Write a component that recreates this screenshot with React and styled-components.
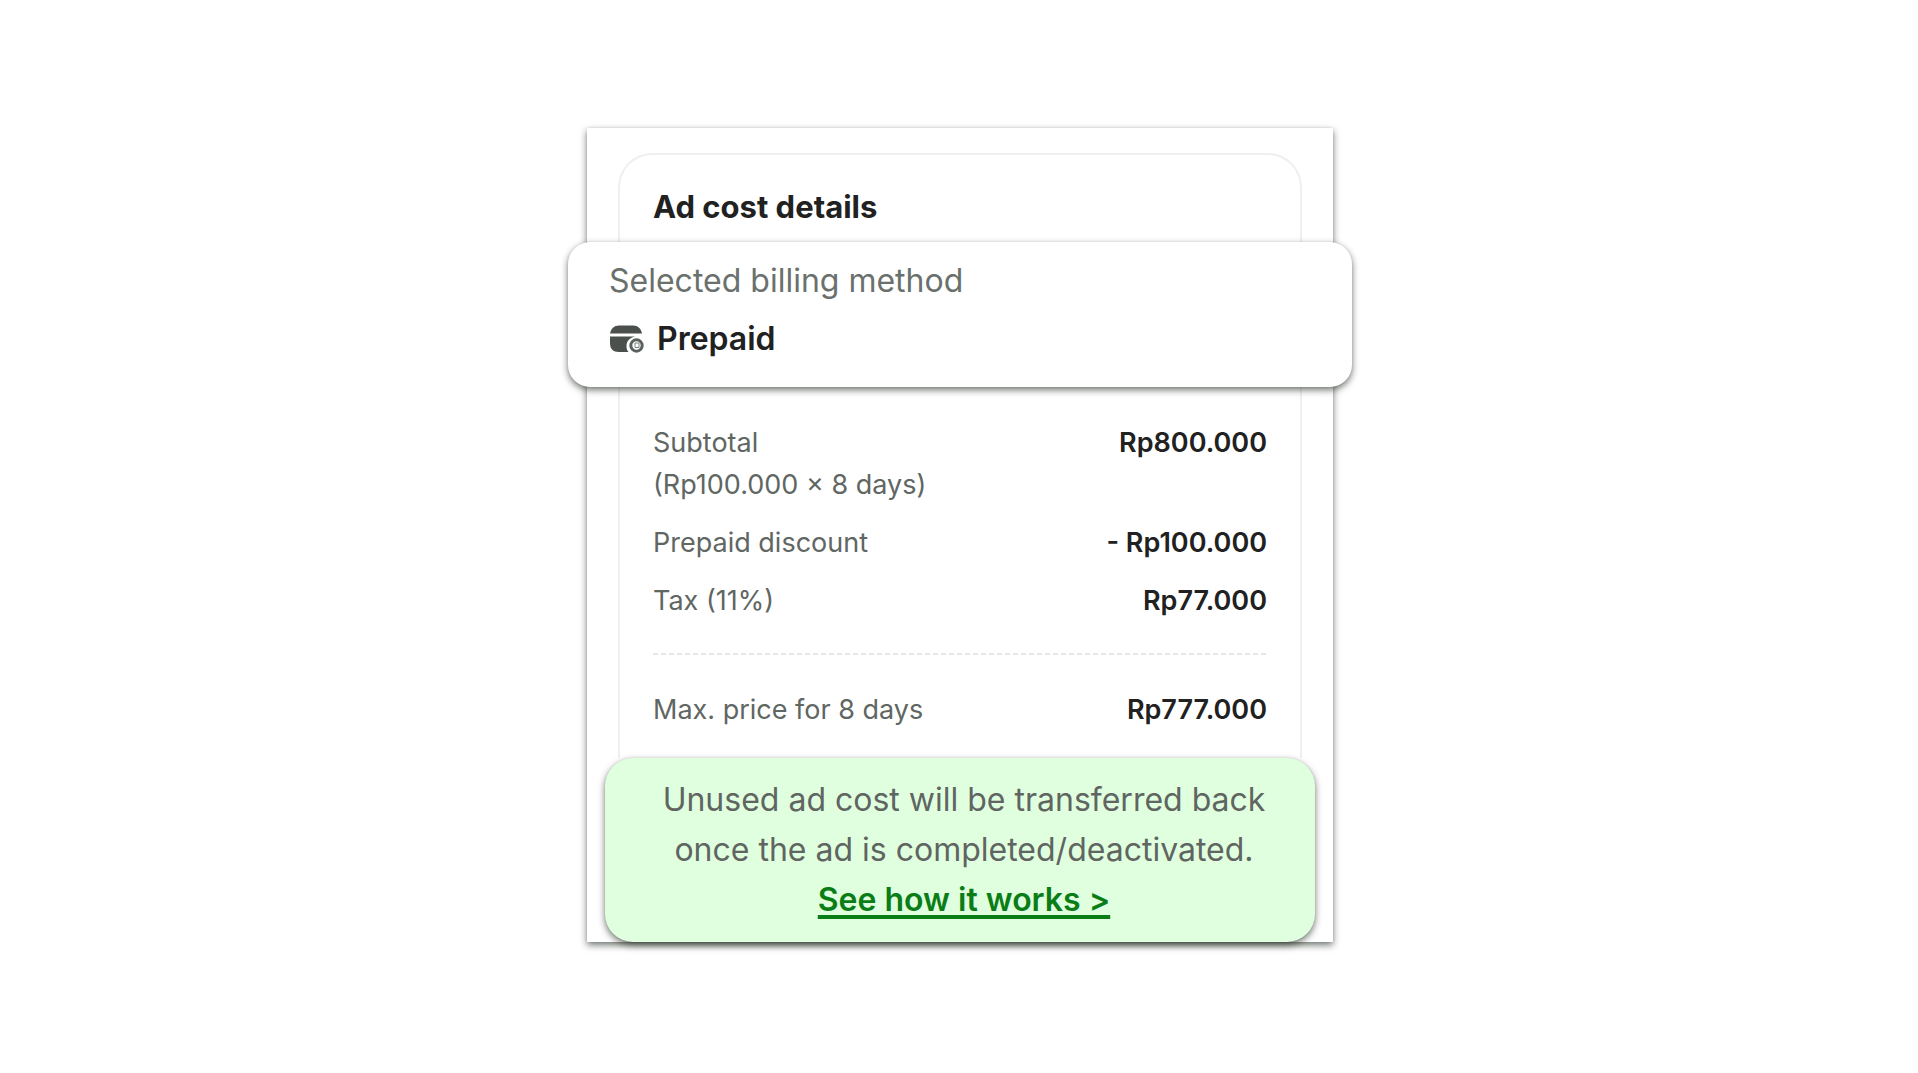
import React from "react";
import styled, { createGlobalStyle } from "styled-components";

const GlobalStyle = createGlobalStyle`
  * { box-sizing: border-box; }
  body {
    margin: 0;
    background: #ffffff;
    color: #212121;
    font-family: Inter, "Liberation Sans", sans-serif;
  }
`;

const lift = "0 3px 7px rgba(20, 30, 20, 0.6), 0 0 2px rgba(20, 30, 20, 0.1)";

const Page = styled.main`
  display: flex;
  justify-content: center;
  padding: 128px 24px 128px 26px;
`;

const Sheet = styled.section`
  width: 100%;
  max-width: 746px;
  padding-top: 25px;
  background: #ffffff;
  box-shadow: ${lift};
`;

const CostCard = styled.div`
  margin: 0 31px;
  padding: 32px 33px 27px;
  border: 2px solid #efefef;
  border-bottom: 0;
  border-radius: 34px 34px 0 0;
`;

const Title = styled.h1`
  margin: 0 0 15px;
  font-size: 31px;
  line-height: 40px;
  font-weight: 700;
`;

const BillingCard = styled.div`
  display: flex;
  flex-direction: column;
  gap: 10px;
  margin: 0 -85px 35px;
  padding: 15px 41px 24px;
  border-radius: 22px;
  background: #ffffff;
  box-shadow: ${lift};
  font-size: 32px;
  line-height: 48px;
`;

const BillingLabel = styled.span`
  color: #6a716c;
`;

const BillingMethod = styled.strong`
  display: flex;
  align-items: center;
  gap: 12px;
  font-weight: 600;
`;

const Costs = styled.dl`
  display: flex;
  flex-direction: column;
  gap: 16px;
  margin: 0;
  font-size: 27px;
  line-height: 42px;
`;

const CostRow = styled.div`
  display: flex;
  justify-content: space-between;
`;

const CostLabel = styled.dt`
  color: #606662;
`;

const CostValue = styled.dd`
  margin: 0;
  font-weight: 600;
  white-space: nowrap;
`;

const Divider = styled.hr`
  height: 2px;
  margin: 31px 0 34px;
  border: 0;
  background: repeating-linear-gradient(90deg, #e6e8e6 0 5px, transparent 5px 8px);
`;

const Notice = styled.div`
  position: relative;
  margin: 0 18px;
  padding: 17px 20px 17px 28px;
  border-radius: 28px;
  background: #dfffdf;
  box-shadow: ${lift};
  color: #606562;
  font-size: 32px;
  line-height: 50px;
  text-align: center;
`;

const NoticeText = styled.p`
  margin: 0;
`;

const NoticeLink = styled.a`
  color: #0b7d17;
  font-weight: 600;
  text-decoration: underline;
  text-decoration-thickness: 4px;
  text-underline-offset: 4px;
  text-decoration-skip-ink: none;
`;

function PrepaidIcon() {
  return (
    <svg width="36" height="28" viewBox="0 0 36 28" aria-hidden="true">
      <path d="M1 8.500C2 3.500 5 0.500 10 0.500H24C29 0.500 32 3.500 33 8.500Z" fill="#4b504d" />
      <path
        d="M1 11.500H26C21 12.500 17.500 16 17.500 21C17.500 23.500 18 25.500 19.500 27H10C4 27 1 24 1 18Z"
        fill="#4b504d"
      />
      <circle cx="27.500" cy="20.500" r="5.700" fill="none" stroke="#5b625e" strokeWidth="3" />
      <path d="M26 18h4v4.500h-4z" fill="none" stroke="#7b827e" strokeWidth="1" />
    </svg>
  );
}

const charges = [
  { label: "Subtotal", detail: "(Rp100.000 × 8 days)", value: "Rp800.000" },
  { label: "Prepaid discount", value: "- Rp100.000" },
  { label: "Tax (11%)", value: "Rp77.000" },
];

export default function App() {
  return (
    <>
      <GlobalStyle />
      <Page>
        <Sheet>
          <CostCard>
            <Title>Ad cost details</Title>
            <BillingCard>
              <BillingLabel>Selected billing method</BillingLabel>
              <BillingMethod>
                <PrepaidIcon />
                Prepaid
              </BillingMethod>
            </BillingCard>
            <Costs>
              {charges.map(({ label, detail, value }) => (
                <CostRow key={label}>
                  <CostLabel>
                    {label}
                    {detail && <br />}
                    {detail}
                  </CostLabel>
                  <CostValue>{value}</CostValue>
                </CostRow>
              ))}
            </Costs>
            <Divider />
            <Costs>
              <CostRow>
                <CostLabel>Max. price for 8 days</CostLabel>
                <CostValue>Rp777.000</CostValue>
              </CostRow>
            </Costs>
          </CostCard>
          <Notice>
            <NoticeText>
              Unused ad cost will be transferred back
              <br />
              once the ad is completed/deactivated.
            </NoticeText>
            <NoticeLink href="#how-it-works">See how it works &gt;</NoticeLink>
          </Notice>
        </Sheet>
      </Page>
    </>
  );
}
